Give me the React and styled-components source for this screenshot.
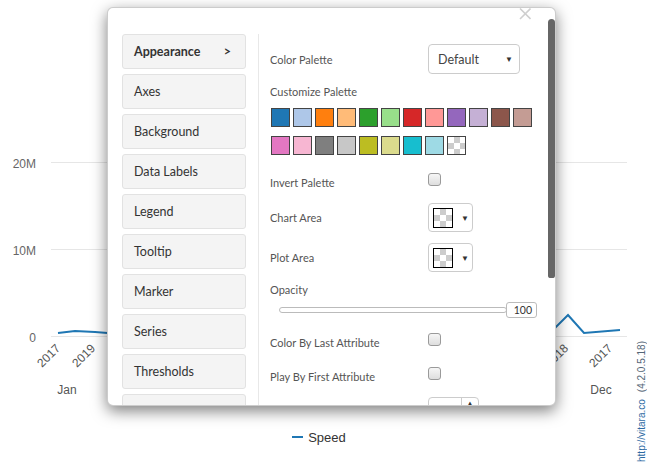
import React from 'react';
import styled, { createGlobalStyle } from 'styled-components';

const GlobalStyle = createGlobalStyle`
  html, body {
    margin: 0;
    padding: 0;
    background: #ffffff;
  }
  body {
    font-family: 'Liberation Sans', Arial, sans-serif;
  }
  * {
    box-sizing: border-box;
  }
`;

const Page = styled.div`
  position: relative;
  width: 651px;
  height: 468px;
  overflow: hidden;
  display: flex;
`;

const ChartColumn = styled.div`
  width: 632px;
  display: flex;
  flex-direction: column;
`;

const Legend = styled.div`
  height: 34px;
  padding-left: 6px;
  display: flex;
  align-items: center;
  justify-content: center;
  gap: 5px;
  font-size: 13px;
  color: #333333;
`;

const LegendLine = styled.span`
  width: 11px;
  height: 2px;
  background: #1f77b4;
`;

const Credit = styled.div`
  flex: 1;
  display: flex;
  justify-content: center;
  align-items: flex-end;
  padding-bottom: 6px;
`;

const CreditText = styled.div`
  writing-mode: vertical-rl;
  transform: rotate(180deg);
  font-size: 10px;
  white-space: nowrap;
  color: #556677;

  a {
    color: #2d6aa3;
    text-decoration: none;
    margin-inline-end: 7px;
  }
`;

const Modal = styled.div`
  position: absolute;
  left: 107px;
  top: 7px;
  width: 449px;
  height: 399px;
  background: #ffffff;
  border: 1px solid rgba(0, 0, 0, 0.2);
  border-radius: 6px;
  box-shadow: 0 5px 15px rgba(0, 0, 0, 0.5);
  overflow: hidden;
`;

const Close = styled.svg`
  position: absolute;
  left: 411px;
  top: 0;
`;

const ScrollThumb = styled.div`
  position: absolute;
  right: 0;
  top: 11px;
  width: 7px;
  height: 259px;
  background: #666666;
  border-radius: 4px 4px 3px 3px;
`;

const ModalBody = styled.div`
  display: flex;
  height: 100%;
  padding: 26px 0 0 14px;
  font-family: Lato, 'Open Sans', sans-serif;
`;

const Menu = styled.div`
  width: 124px;
  flex-shrink: 0;
  display: flex;
  flex-direction: column;
  gap: 5px;
`;

const MenuItem = styled.div`
  height: 35px;
  flex-shrink: 0;
  display: flex;
  align-items: center;
  justify-content: space-between;
  padding: 0 14px 0 11px;
  background: #f4f4f4;
  border: 1px solid #e2e2e2;
  border-radius: 3px;
  font-size: 12.5px;
  color: #333333;
  font-weight: ${props => (props.$active ? 700 : 400)};
`;

const Panel = styled.div`
  flex: 1;
  margin-left: 12px;
  padding: 10px 0 0 11px;
  border-left: 1px solid #e8e8e8;
  display: flex;
  flex-direction: column;
`;

const Row = styled.div`
  display: flex;
  align-items: center;
  flex-shrink: 0;
  height: ${props => props.$h}px;
  margin-top: ${props => props.$mt || 0}px;
`;

const Label = styled.div`
  width: 158px;
  font-size: 11px;
  color: #555555;
  padding-top: ${props => (props.$shift ? 2 : 0)}px;
`;

const BlockLabel = styled.div`
  font-size: 11px;
  color: #555555;
  line-height: 16px;
  margin-top: ${props => props.$mt}px;
`;

const Select = styled.div`
  width: 92px;
  height: 30px;
  display: flex;
  align-items: center;
  justify-content: space-between;
  padding: 0 6px 0 9px;
  border: 1px solid #cccccc;
  border-radius: 4px;
  font-size: 12.5px;
  color: #444444;
`;

const Caret = styled.span`
  font-size: 8px;
  color: #333333;
`;

const Swatches = styled.div`
  display: grid;
  grid-template-columns: repeat(12, 19px);
  gap: 9px 3px;
  margin: 8px 0 0 1px;
`;

const checker = `
  background: repeating-conic-gradient(#cccccc 0 25%, #ffffff 0 50%) 0 0 / 12px 12px;
`;

const Swatch = styled.div`
  width: 19px;
  height: 19px;
  border: 1px solid #444444;
  background: ${props => props.$color};
  ${props => (props.$color ? '' : checker)}
`;

const Checkbox = styled.div`
  width: 13px;
  height: 13px;
  margin-top: -3px;
  border: 1px solid #9a9a9a;
  border-radius: 3px;
  background: linear-gradient(#f6f6f6, #dedede);
`;

const Picker = styled.div`
  width: 45px;
  height: 29px;
  display: flex;
  align-items: center;
  gap: 8px;
  padding-left: 4px;
  border: 1px solid #cccccc;
  border-radius: 4px;
`;

const PickerSwatch = styled.div`
  width: 20px;
  height: 20px;
  border: 1px solid #000000;
  ${checker}
`;

const SliderRow = styled.div`
  display: flex;
  align-items: center;
  height: 16px;
  margin-top: 4px;
  padding-left: 9px;
`;

const Track = styled.div`
  width: 228px;
  height: 6px;
  border: 1px solid #bbbbbb;
  border-radius: 3px;
`;

const ValueBox = styled.div`
  width: 31px;
  height: 16px;
  margin-left: -1px;
  border: 1px solid #bbbbbb;
  border-radius: 3px;
  font-size: 10.5px;
  line-height: 14px;
  text-align: right;
  padding-right: 4px;
  color: #333333;
`;

const Spinner = styled.div`
  width: 51px;
  height: 30px;
  margin-left: 158px;
  display: flex;
  border: 1px solid #cccccc;
  border-radius: 4px;
`;

const SpinnerField = styled.div`
  width: 33px;
  border-right: 1px solid #cccccc;
`;

const SpinnerArrow = styled.div`
  flex: 1;
  text-align: center;
  font-size: 6px;
  line-height: 10px;
  color: #333333;
`;

const palette = [
  '#1f77b4', '#aec7e8', '#ff7f0e', '#ffbb78', '#2ca02c', '#98df8a',
  '#d62728', '#ff9896', '#9467bd', '#c5b0d5', '#8c564b', '#c49c94',
  '#e377c2', '#f7b6d2', '#7f7f7f', '#c7c7c7', '#bcbd22', '#dbdb8d',
  '#17becf', '#9edae5', null,
];

// last item is only half visible below the fold, so no label is shown
const menuItems = ['Appearance', 'Axes', 'Background', 'Data Labels', 'Legend', 'Tooltip', 'Marker', 'Series', 'Thresholds', ''];

function Chart() {
  const grid = [162.5, 249.5, 336.5];
  const yLabels = [['20M', 167.5], ['10M', 254.5], ['0', 341.5]];
  const years = [['2017', 61], ['2019', 96], ['2018', 131], ['2018', 569], ['2017', 613]];

  return (
    <svg width="632" height="420">
      {grid.map(y => (
        <line key={y} x1="51" x2="627" y1={y} y2={y} stroke="#e6e6e6" strokeWidth="1" />
      ))}
      {yLabels.map(([t, y]) => (
        <text key={t} x="36" y={y} textAnchor="end" fontSize="12" fill="#666666" fontFamily="Liberation Sans, Arial, sans-serif">{t}</text>
      ))}
      <polyline
        points="58,333 75,331 95,332 120,334 200,333 300,332 400,334 500,333 545,333 555,328 568,315 584,333 620,330"
        fill="none"
        stroke="#1f77b4"
        strokeWidth="2"
      />
      {years.map(([t, x], i) => (
        <text
          key={i}
          x={x}
          y="349"
          textAnchor="end"
          fontSize="12"
          fill="#555555"
          fontFamily="Liberation Sans, Arial, sans-serif"
          transform={`rotate(-45 ${x} 349)`}
        >
          {t}
        </text>
      ))}
      <text x="67" y="393.5" textAnchor="middle" fontSize="12" fill="#555555" fontFamily="Liberation Sans, Arial, sans-serif">Jan</text>
      <text x="601" y="393.5" textAnchor="middle" fontSize="12" fill="#555555" fontFamily="Liberation Sans, Arial, sans-serif">Dec</text>
    </svg>
  );
}

export default function App() {
  return (
    <>
      <GlobalStyle />
      <Page>
        <ChartColumn>
          <Chart />
          <Legend>
            <LegendLine />
            <span>Speed</span>
          </Legend>
        </ChartColumn>
        <Credit>
          <CreditText>
            <a href="#">http://vitara.co</a>(4.2.0.5.18)
          </CreditText>
        </Credit>

        <Modal>
          <Close width="12" height="12" viewBox="0 0 12 12">
            <path d="M1 0.5 L11.5 11 M11.5 0.5 L1 11" stroke="#cfcfcf" strokeWidth="1.6" />
          </Close>
          <ScrollThumb />
          <ModalBody>
            <Menu>
              {menuItems.map((item, i) => (
                <MenuItem key={i} $active={i === 0}>
                  {item && <span>{item}</span>}
                  {i === 0 && <span>&gt;</span>}
                </MenuItem>
              ))}
            </Menu>

            <Panel>
              <Row $h={30}>
                <Label>Color Palette</Label>
                <Select>
                  <span>Default</span>
                  <Caret>▼</Caret>
                </Select>
              </Row>

              <BlockLabel $mt={10}>Customize Palette</BlockLabel>
              <Swatches>
                {palette.map((c, i) => (
                  <Swatch key={i} $color={c} />
                ))}
              </Swatches>

              <Row $h={22} $mt={15}>
                <Label $shift>Invert Palette</Label>
                <Checkbox />
              </Row>

              <Row $h={29} $mt={11}>
                <Label>Chart Area</Label>
                <Picker>
                  <PickerSwatch />
                  <Caret>▼</Caret>
                </Picker>
              </Row>

              <Row $h={29} $mt={11}>
                <Label>Plot Area</Label>
                <Picker>
                  <PickerSwatch />
                  <Caret>▼</Caret>
                </Picker>
              </Row>

              <BlockLabel $mt={10}>Opacity</BlockLabel>
              <SliderRow>
                <Track />
                <ValueBox>100</ValueBox>
              </SliderRow>

              <Row $h={22} $mt={12}>
                <Label $shift>Color By Last Attribute</Label>
                <Checkbox />
              </Row>

              <Row $h={22} $mt={12}>
                <Label $shift>Play By First Attribute</Label>
                <Checkbox />
              </Row>

              <Row $h={30} $mt={11}>
                <Spinner>
                  <SpinnerField />
                  <SpinnerArrow>▲</SpinnerArrow>
                </Spinner>
              </Row>
            </Panel>
          </ModalBody>
        </Modal>
      </Page>
    </>
  );
}
